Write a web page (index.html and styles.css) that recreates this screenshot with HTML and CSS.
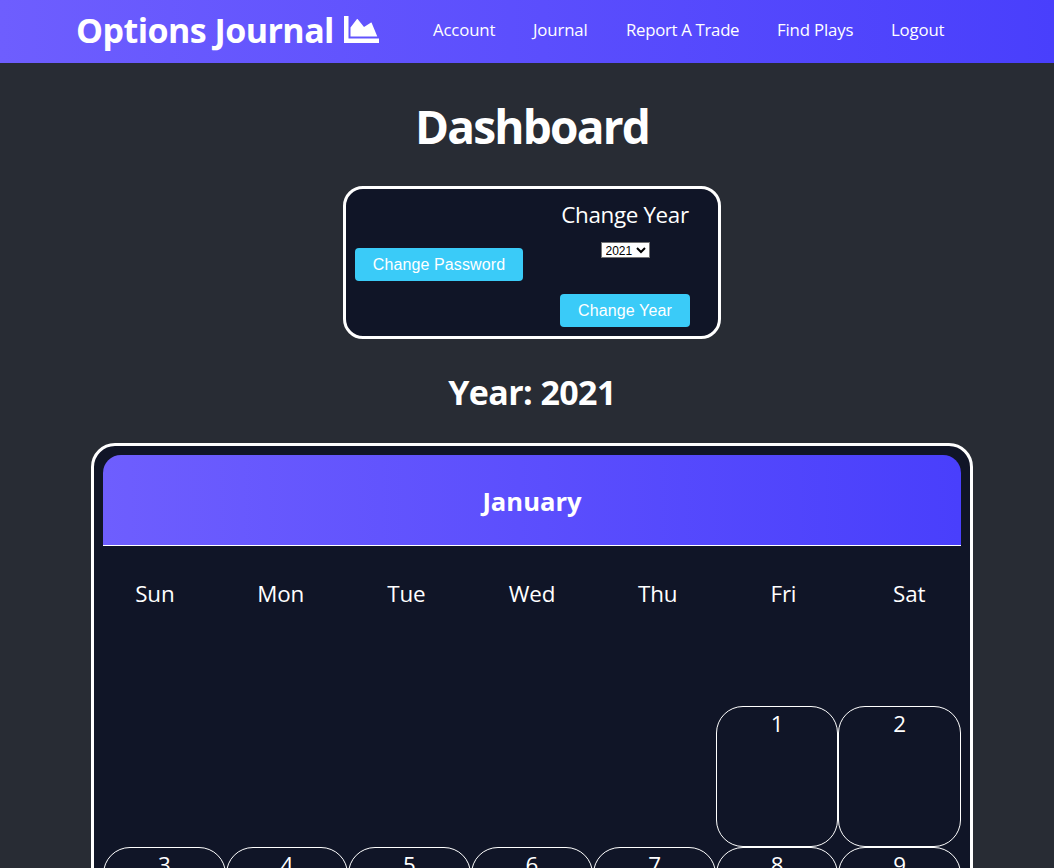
FILE: index.html
```html
<!DOCTYPE html>
<html lang="en">
<head>
<meta charset="utf-8">
<title>Options Journal</title>
<link rel="stylesheet" href="styles.css">
</head>
<body>
<nav class="navbar">
  <h1 class="logo"><span class="logo-text">Options Journal</span>
    <svg class="logo-icon" viewBox="0 0 35 27" aria-hidden="true"><path d="M0 0h4.500v22.500H35V27H0z"/><path d="M6.500 20.500V11.500L12.800 3.200c.3-.4.700-.4 1 0L20 11l6.700-4.300c.4-.3.800-.2 1 .3L33.300 20.500z"/></svg>
  </h1>
  <ul class="menu">
    <li class="m1">Account</li><li class="m2">Journal</li><li class="m3">Report A Trade</li><li class="m4">Find Plays</li><li class="m5">Logout</li>
  </ul>
</nav>
<main class="page">
  <h1 class="title"><span>Dashboard</span></h1>
  <section class="settings">
    <button class="btn btn-password">Change Password</button>
    <form class="year-form">
      <label class="year-label" for="year">Change Year</label>
      <select class="year-select" id="year"><option>2021</option></select>
      <button class="btn btn-year" type="button">Change Year</button>
    </form>
  </section>
  <h2 class="year"><span>Year: 2021</span></h2>
  <section class="calendar">
    <h3 class="month"><span>January</span></h3>
    <div class="weekdays"><span>Sun</span><span>Mon</span><span>Tue</span><span>Wed</span><span>Thu</span><span>Fri</span><span>Sat</span></div>
    <div class="days">
      <div class="day first">1</div><div class="day">2</div>
      <div class="day">3</div><div class="day">4</div><div class="day">5</div><div class="day">6</div><div class="day">7</div><div class="day">8</div><div class="day">9</div>
    </div>
  </section>
</main>
</body>
</html>
```
FILE: styles.css
```css
* { box-sizing: border-box; }
html, body { height: 868px; overflow: hidden; }
body { margin: 0; background: #282c34; color: #fff; font-family: "Segoe UI", "Open Sans", sans-serif; }
h1, h2, h3, ul { margin: 0; padding: 0; }
.navbar { display: flex; height: 63px; padding-left: 76px; background: linear-gradient(90deg, rgb(110, 94, 254) 0%, rgb(73, 63, 252) 100%); }
.logo { display: flex; align-items: flex-start; width: 357px; font-size: 34px; line-height: 61px; white-space: nowrap; }
.logo-text { width: 268px; letter-spacing: -0.55px; }
.logo-icon { flex: none; width: 35px; height: 27px; margin-top: 16px; fill: #fff; }
.menu { display: flex; list-style: none; font-size: 16.8px; line-height: 59px; white-space: nowrap; }
.m1 { width: 100px; }
.m2 { width: 93px; }
.m3 { width: 151px; }
.m4 { width: 114px; }
.menu li { letter-spacing: -0.15px; }
.menu .m3 { letter-spacing: -0.3px; }
.page { display: flex; flex-direction: column; align-items: center; padding-left: 10px; }
.title { margin: 33px 0 -1px; font-size: 46px; line-height: 60px; letter-spacing: -1.8px; }
.settings { display: flex; align-items: center; width: 378px; height: 153px; margin-top: 31px; padding: 0 28px 0 9px; border: 3px solid #fff; border-radius: 20px; background: #101527; justify-content: space-between; }
.btn { height: 33px; padding: 0; border: 0; border-radius: 4px; background: #3acbf8; color: #fff; font: 16px/33px "Liberation Sans", Arial, sans-serif; letter-spacing: 0.12px; }
.btn-password { width: 168px; margin-top: 4px; }
.year-form { display: flex; flex-direction: column; align-items: center; width: 130px; height: 147px; padding-top: 11px; }
.year-label { font-size: 22.4px; line-height: 30px; letter-spacing: -0.35px; white-space: nowrap; }
.year-select { width: 49px; height: 16px; margin-top: 12px; padding: 0; border: 1px solid #767676; border-radius: 0; background-color: #fff; color: #000; font: 12px/14px "Liberation Sans", Arial, sans-serif; }
.btn-year { width: 130px; margin-top: 36px; }
.year { margin-top: 33px; font-size: 34px; line-height: 40px; letter-spacing: -0.6px; }
.calendar { width: 882px; height: 600px; margin-top: 31px; padding: 9px; border: 3px solid #fff; border-radius: 24px; background: #101527; }
.month { height: 91px; border-bottom: 1px solid #fff; border-radius: 18px 18px 0 0; background: linear-gradient(90deg, rgb(110, 94, 254) 0%, rgb(73, 63, 252) 100%); font-size: 25.6px; line-height: 93px; text-align: center; }
.weekdays { display: grid; grid-template-columns: repeat(7, 1fr); height: 160px; margin: 0 -11px; padding-top: 33px; font-size: 22.4px; line-height: 30px; letter-spacing: -0.2px; text-align: center; }
.days { display: grid; grid-template-columns: repeat(7, 1fr); grid-auto-rows: 141px; }
.day { border: 1px solid #fff; border-radius: 27px; font-size: 22.4px; line-height: 33px; text-align: center; }
.first { grid-column: 6; }
```
